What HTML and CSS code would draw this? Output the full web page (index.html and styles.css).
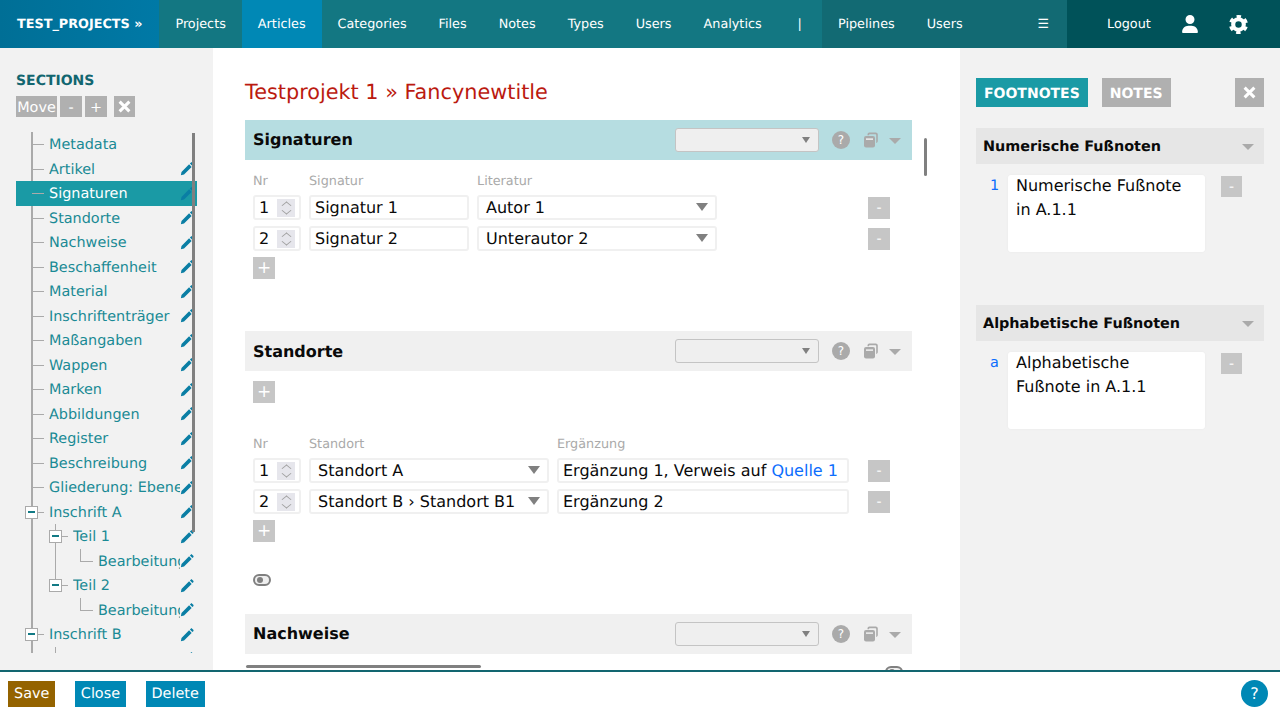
FILE: index.html
```html
<!DOCTYPE html>
<html lang="en">
<head>
  <meta charset="UTF-8" />
  <title>Testprojekt 1 » Fancynewtitle</title>
  <link rel="stylesheet" href="styles.css">
</head>
<body>
  <svg class="defs" width="0" height="0">
    <symbol id="i-pencil" viewBox="0 0 16 16">
      <path d="M1 15l.7-3.600L10.400 2.700l2.900 2.900L4.600 14.300zM11.300 1.800l1-1c.5-.5 1.100-.5 1.600 0l1.300 1.300c.5.5.5 1.100 0 1.600l-1 1z"/>
    </symbol>
    <symbol id="i-copy" viewBox="0 0 16 16">
      <path d="M4.500 3.200V2.500C4.500 1.400 5.300.6 6.400.6h6.400c1.100 0 2 .9 2 2v6.500c0 1-.7 1.800-1.600 1.900V9.300V2.900c0-.4-.3-.7-.7-.7H6.700c-.4 0-.7.3-.7.7v.3z"/>
      <rect x="1" y="4" width="11" height="11.500" rx="2"/>
      <rect x="3" y="6.500" width="7" height="1.200" fill="#fff"/>
    </symbol>
    <symbol id="i-x" viewBox="0 0 12 12">
      <path d="M1.500 1.500l9 9M10.500 1.500l-9 9" stroke="#fff" stroke-width="2.800" fill="none"/>
    </symbol>
  </svg>

  <!-- Top bar -->
  <header class="topbar">
    <a class="brand">TEST_PROJECTS »</a>
    <nav class="mainnav">
      <a>Projects</a>
      <a class="active">Articles</a>
      <a>Categories</a>
      <a>Files</a>
      <a>Notes</a>
      <a>Types</a>
      <a>Users</a>
      <a>Analytics</a>
      <a class="sep">|</a>
    </nav>
    <nav class="adminnav">
      <a>Pipelines</a>
      <a>Users</a>
      <a class="burger">☰</a>
    </nav>
    <div class="usernav">
      <a>Logout</a>
      <svg class="usericon" viewBox="0 0 448 512" width="16" height="18"><path fill="#fff" d="M224 256a128 128 0 1 0 0-256 128 128 0 1 0 0 256zm-45.700 48C79.800 304 0 383.800 0 482.300 0 498.700 13.300 512 29.700 512h388.600c16.400 0 29.700-13.300 29.700-29.700C448 383.800 368.200 304 269.700 304z"/></svg>
      <svg class="gearicon" viewBox="0 0 24 24" width="19" height="19" fill="none" stroke="#fff">
        <circle cx="12" cy="12" r="6.700" stroke-width="5.200"/>
        <circle cx="12" cy="12" r="10" stroke-width="4" stroke-dasharray="5.400 5.072" transform="rotate(15 12 12)"/>
      </svg>
    </div>
  </header>

  <div class="workspace">
    <!-- Sections sidebar -->
    <aside class="sidebar">
      <h2>SECTIONS</h2>
      <div class="tools">
        <button class="tool move">Move</button>
        <button class="tool">-</button>
        <button class="tool">+</button>
        <button class="tool close"><svg><use href="#i-x"/></svg></button>
      </div>
      <div class="tree">
        <div class="row leaf"><span class="label">Metadata</span></div>
        <div class="row leaf"><span class="label">Artikel</span><svg class="pen"><use href="#i-pencil"/></svg></div>
        <div class="row leaf selected"><span class="label">Signaturen</span><svg class="pen"><use href="#i-pencil"/></svg></div>
        <div class="row leaf"><span class="label">Standorte</span><svg class="pen"><use href="#i-pencil"/></svg></div>
        <div class="row leaf"><span class="label">Nachweise</span><svg class="pen"><use href="#i-pencil"/></svg></div>
        <div class="row leaf"><span class="label">Beschaffenheit</span><svg class="pen"><use href="#i-pencil"/></svg></div>
        <div class="row leaf"><span class="label">Material</span><svg class="pen"><use href="#i-pencil"/></svg></div>
        <div class="row leaf"><span class="label">Inschriftenträger</span><svg class="pen"><use href="#i-pencil"/></svg></div>
        <div class="row leaf"><span class="label">Maßangaben</span><svg class="pen"><use href="#i-pencil"/></svg></div>
        <div class="row leaf"><span class="label">Wappen</span><svg class="pen"><use href="#i-pencil"/></svg></div>
        <div class="row leaf"><span class="label">Marken</span><svg class="pen"><use href="#i-pencil"/></svg></div>
        <div class="row leaf"><span class="label">Abbildungen</span><svg class="pen"><use href="#i-pencil"/></svg></div>
        <div class="row leaf"><span class="label">Register</span><svg class="pen"><use href="#i-pencil"/></svg></div>
        <div class="row leaf"><span class="label">Beschreibung</span><svg class="pen"><use href="#i-pencil"/></svg></div>
        <div class="row leaf"><span class="label">Gliederung: Ebenen</span><svg class="pen"><use href="#i-pencil"/></svg></div>
        <div class="row folder"><i class="box"></i><span class="label">Inschrift A</span><svg class="pen"><use href="#i-pencil"/></svg></div>
        <div class="subtree">
          <div class="row folder two"><i class="box"></i><span class="label">Teil 1</span><svg class="pen"><use href="#i-pencil"/></svg></div>
          <div class="row three"><span class="label">Bearbeitungen</span><svg class="pen"><use href="#i-pencil"/></svg></div>
          <div class="row folder two"><i class="box"></i><span class="label">Teil 2</span><svg class="pen"><use href="#i-pencil"/></svg></div>
          <div class="row three"><span class="label">Bearbeitungen</span><svg class="pen"><use href="#i-pencil"/></svg></div>
        </div>
        <div class="row folder"><i class="box"></i><span class="label">Inschrift B</span><svg class="pen"><use href="#i-pencil"/></svg></div>
        <div class="subtree">
          <div class="row folder two"><i class="box"></i><span class="label">Teil 1</span><svg class="pen"><use href="#i-pencil"/></svg></div>
        </div>
        <div class="treebar"></div>
      </div>
    </aside>

    <!-- Article content -->
    <main class="content">
      <h1>Testprojekt 1 » Fancynewtitle</h1>

      <section class="sec sec-sign">
        <div class="sechead current">
          <h3>Signaturen</h3>
          <div class="secselect"></div>
          <span class="help">?</span>
          <svg class="copy"><use href="#i-copy"/></svg>
          <i class="caret"></i>
        </div>
        <div class="secbody">
          <div class="grid sign labels"><span>Nr</span><span>Signatur</span><span>Literatur</span></div>
          <div class="grid sign">
            <div class="field num">1<i class="spin"></i></div>
            <div class="field">Signatur 1</div>
            <div class="field select">Autor 1</div>
            <button class="sq minus">-</button>
          </div>
          <div class="grid sign">
            <div class="field num">2<i class="spin"></i></div>
            <div class="field">Signatur 2</div>
            <div class="field select">Unterautor 2</div>
            <button class="sq minus">-</button>
          </div>
          <button class="sq plus">+</button>
        </div>
      </section>

      <section class="sec sec-place">
        <div class="sechead">
          <h3>Standorte</h3>
          <div class="secselect"></div>
          <span class="help">?</span>
          <svg class="copy"><use href="#i-copy"/></svg>
          <i class="caret"></i>
        </div>
        <div class="secbody">
          <button class="sq plus first">+</button>
          <div class="grid place labels"><span>Nr</span><span>Standort</span><span>Ergänzung</span></div>
          <div class="grid place">
            <div class="field num">1<i class="spin"></i></div>
            <div class="field select">Standort A</div>
            <div class="field">Ergänzung 1, Verweis auf&nbsp;<a>Quelle 1</a></div>
            <button class="sq minus">-</button>
          </div>
          <div class="grid place">
            <div class="field num">2<i class="spin"></i></div>
            <div class="field select">Standort B › Standort B1</div>
            <div class="field">Ergänzung 2</div>
            <button class="sq minus">-</button>
          </div>
          <button class="sq plus">+</button>
          <i class="toggle"></i>
        </div>
      </section>

      <section class="sec">
        <div class="sechead">
          <h3>Nachweise</h3>
          <div class="secselect"></div>
          <span class="help">?</span>
          <svg class="copy"><use href="#i-copy"/></svg>
          <i class="caret"></i>
        </div>
      </section>

      <div class="vbar"></div>
      <div class="hbar"></div>
      <i class="toggle lower"></i>
    </main>

    <!-- Footnotes pane -->
    <aside class="notes">
      <div class="tabs">
        <button class="tab active">FOOTNOTES</button>
        <button class="tab">NOTES</button>
        <button class="tab closer"><svg><use href="#i-x"/></svg></button>
      </div>

      <div class="notegroup">
        <div class="notehead"><h4>Numerische Fußnoten</h4><i class="caret"></i></div>
        <div class="note">
          <a class="mark">1</a>
          <div class="notetext"><p>Numerische Fußnote in A.1.1</p></div>
          <button class="sq minus">-</button>
        </div>
      </div>

      <div class="notegroup">
        <div class="notehead"><h4>Alphabetische Fußnoten</h4><i class="caret"></i></div>
        <div class="note">
          <a class="mark">a</a>
          <div class="notetext"><p>Alphabetische Fußnote in A.1.1</p></div>
          <button class="sq minus">-</button>
        </div>
      </div>
    </aside>
  </div>

  <!-- Action bar -->
  <footer class="actions">
    <button class="act save">Save</button>
    <button class="act">Close</button>
    <button class="act">Delete</button>
    <span class="bighelp">?</span>
  </footer>
</body>
</html>
```
FILE: styles.css
```css
/* Reset & base */
* { box-sizing: border-box; margin: 0; padding: 0; }
html, body { height: 100%; overflow: hidden; }
body {
  display: flex;
  flex-direction: column;
  font-family: "DejaVu Sans", sans-serif;
  text-rendering: geometricPrecision;
  color: #0a0a0a;
  background: #fff;
}
button { font-family: inherit; border: none; cursor: pointer; text-rendering: geometricPrecision; }
i { display: block; }
.defs { position: absolute; }

/* Top bar */
.topbar { display: flex; height: 48px; flex: none; font-size: 12.800px; color: #fff; }
.topbar a { display: flex; align-items: center; }
.brand {
  width: 159.400px;
  padding-left: 17px;
  font-weight: bold;
  background: linear-gradient(to right, #006f96, #0079a6);
}
.mainnav { display: flex; width: 662.600px; background: #137782; }
.adminnav { display: flex; width: 245px; background: #126a73; }
.mainnav a, .adminnav a { padding: 0 16px; }
.mainnav a.active { background: #0088b5; }
.mainnav .sep { width: 44px; padding: 0; justify-content: center; }
.adminnav .burger { margin-left: 43px; }
.usernav {
  display: flex;
  align-items: center;
  flex: 1;
  padding-left: 40px;
  background: #005259;
}
.usericon { margin-left: 31px; }
.gearicon { margin-left: 31px; }

/* Page columns */
.workspace { display: flex; flex: 1; min-height: 0; }

/* Sidebar */
.sidebar { width: 213px; flex: none; padding: 24px 16px 0; background: #f2f2f2; }
.sidebar h2 { padding-top: 1px; font-size: 14px; line-height: 17px; color: #126670; }
.tools { display: flex; gap: 3px; margin-top: 6px; height: 21px; }
.tool {
  width: 22px;
  padding-top: 3px;
  font-size: 14.400px;
  line-height: 18px;
  color: #fff;
  background: #b0b0b0;
}
.tool.move { width: 41px; }
.tool.close { display: flex; align-items: center; justify-content: center; width: 21px; margin-left: 4px; padding: 0; }
.tool svg { width: 13px; height: 13px; }

.tree { position: relative; width: 181px; height: 521px; margin-top: 15px; overflow: hidden; }
.tree::before {
  content: "";
  position: absolute;
  left: 15px;
  top: 0;
  bottom: 0;
  width: 2px;
  background: #aaa;
}
.row {
  position: relative;
  display: flex;
  align-items: center;
  height: 24.500px;
  padding: 2px 0 0 33px;
  font-size: 14.400px;
  color: #1a8a95;
}
.row.selected { background: #1a9aa5; color: #fff; }
.label { flex: 1; min-width: 0; overflow: hidden; white-space: nowrap; }
.pen { flex: none; width: 14px; height: 14px; margin: -1px 3px 0 0; fill: #0a7ea4; }

/* tree connectors */
.leaf::before, .folder::before {
  content: "";
  position: absolute;
  left: 16px;
  top: 50%;
  width: 12px;
  height: 1px;
  background: #aaa;
}
.box {
  position: absolute;
  left: 9px;
  top: 50%;
  width: 13px;
  height: 13px;
  margin-top: -6px;
  background: #fff;
  border: 1px solid #aaa;
}
.box::after {
  content: "";
  position: absolute;
  left: 2px;
  top: 4px;
  width: 7px;
  height: 2px;
  background: #127a85;
}
.row.two { padding-left: 57px; }
.two::before { left: 40px; width: 12px; }
.two .box { left: 33px; }
.row.three { padding-left: 82px; }
.three::before {
  content: "";
  position: absolute;
  left: 64px;
  top: 0;
  width: 12px;
  height: 12px;
  border-left: 1px solid #aaa;
  border-bottom: 1px solid #aaa;
}
.subtree { position: relative; }
.subtree::before {
  content: "";
  position: absolute;
  left: 39px;
  top: 0;
  height: 62px;
  width: 1px;
  background: #aaa;
}
.subtree:last-of-type::before { height: 12px; }
.treebar {
  position: absolute;
  left: 176px;
  top: 1px;
  width: 3px;
  height: 399px;
  background: #808080;
}

/* Main column */
.content {
  position: relative;
  width: 747px;
  flex: none;
  padding: 32px 48px 0 32px;
  overflow: hidden;
}
.content h1 {
  font-size: 20.800px;
  font-weight: normal;
  line-height: 24px;
  margin-bottom: 16px;
  color: #bb1a10;
}
.sechead {
  display: flex;
  align-items: center;
  height: 40px;
  padding: 0 11px 0 8px;
  background: #f0f0f0;
}
.sechead.current { background: #b6dde1; }
.sechead h3 { flex: 1; padding-bottom: 1px; font-size: 16px; }
.sec-place .sechead h3 { padding-bottom: 0; }
.secselect {
  position: relative;
  width: 144px;
  height: 24px;
  background: #efefef;
  border: 1px solid #c4c4c4;
  border-radius: 3px;
}
.secselect::after {
  content: "";
  position: absolute;
  right: 8px;
  top: 8px;
  border: 4px solid transparent;
  border-top: 6px solid #808080;
  border-bottom: 0;
}
.help {
  width: 18px;
  height: 18px;
  margin-left: 13px;
  border-radius: 50%;
  font-size: 12px;
  line-height: 18px;
  text-align: center;
  color: #fff;
  background: #aaa;
}
.copy { width: 16px; height: 16px; margin-left: 13px; fill: #aaa; }
.caret {
  width: 0;
  height: 0;
  margin-left: 10px;
  margin-top: 2px;
  border: 6px solid transparent;
  border-top: 6px solid #aaa;
  border-bottom: 0;
}

.sec-sign { height: 211px; }
.sec-place { height: 283px; }
.secbody { position: relative; padding: 13px 0 0 8px; }
.grid { display: grid; column-gap: 8px; align-items: center; height: 25px; margin-bottom: 6px; }
.grid.sign { grid-template-columns: 48px 160px 240px 1fr 22px; margin-right: 22px; }
.grid.place { grid-template-columns: 48px 240px 292px 1fr 22px; margin-right: 22px; }
.grid.labels { height: 16px; margin-bottom: 6px; font-size: 12.800px; color: #aaa; }
.field {
  position: relative;
  display: flex;
  align-items: center;
  height: 25px;
  padding-left: 4px;
  font-size: 16px;
  white-space: nowrap;
  background: #fff;
  border: 2px solid #f0f0f0;
  border-radius: 3px;
}
.field a { color: #0d6efd; }
.field.select { padding-left: 7px; }
.field.select::after {
  content: "";
  position: absolute;
  right: 7px;
  top: 6px;
  border: 6px solid transparent;
  border-top: 8px solid #808080;
  border-bottom: 0;
}
.spin {
  position: absolute;
  left: 22px;
  top: 2px;
  width: 18px;
  height: 18px;
  background: #e6e6ec;
}
.spin::before, .spin::after {
  content: "";
  position: absolute;
  left: 6px;
  width: 6px;
  height: 6px;
  border-left: 1px solid #a0a0a0;
  border-top: 1px solid #a0a0a0;
  transform: scaleY(0.8) rotate(45deg);
}
.spin::before { top: 3px; }
.spin::after { top: 8px; transform: scaleY(0.8) rotate(225deg); }
.sq {
  display: block;
  width: 22px;
  height: 22px;
  font-size: 14px;
  line-height: 22px;
  color: #fff;
  background: #c6c6c6;
}
.grid .sq.minus { grid-column: 5; grid-row: 1; }
.sq.plus { margin-top: 1px; font-size: 17px; }
.sq.plus.first { margin: -3px 0 33px; }
.secbody .toggle { margin-top: 32px; }
.toggle {
  position: relative;
  width: 18px;
  height: 12px;
  background: #eee;
  border: 2px solid #808080;
  border-radius: 6px;
}
.toggle::after {
  content: "";
  position: absolute;
  left: 2px;
  top: 1px;
  width: 6px;
  height: 6px;
  border-radius: 50%;
  background: #808080;
}
.toggle.lower { position: absolute; left: 672px; top: 618px; }
.vbar {
  position: absolute;
  left: 711px;
  top: 90px;
  width: 3px;
  height: 38px;
  border-radius: 2px;
  background: #808080;
}
.hbar {
  position: absolute;
  left: 33px;
  top: 617px;
  width: 235px;
  height: 3px;
  border-radius: 2px;
  background: #808080;
}

/* Footnotes pane */
.notes { flex: 1; padding: 30px 16px 0; background: #f2f2f2; }
.tabs { display: flex; gap: 14px; height: 29px; }
.tab {
  padding: 2px 8px 0;
  font-size: 14px;
  font-weight: bold;
  color: #fff;
  background: #b0b0b0;
}
.tab.active { background: #1a9aa5; }
.tab.closer { display: flex; align-items: center; justify-content: center; width: 29px; margin-left: auto; padding: 0; }
.tab svg { width: 13px; height: 13px; }
.notegroup { height: 177px; margin-top: 21px; }
.notegroup + .notegroup { margin-top: 0; }
.notehead {
  display: flex;
  align-items: center;
  height: 36px;
  padding: 0 10px 0 7px;
  background: #e6e6e6;
}
.notehead h4 { flex: 1; padding-top: 1px; font-size: 14.400px; }
.note { display: flex; align-items: flex-start; margin-top: 11px; padding-left: 14px; }
.mark { width: 18px; padding-top: 3px; font-size: 14.400px; color: #0d6efd; }
.notetext {
  width: 197px;
  height: 77px;
  padding: 0 8px;
  font-size: 16px;
  line-height: 24px;
  background: #fff;
  border-radius: 3px;
  box-shadow: 0 0 2px #e8e8e8;
}
.notetext p { margin-top: -1px; }
.note .sq { width: 21px; height: 21px; margin: 1px 0 0 16px; }

/* Action bar */
.actions {
  display: flex;
  align-items: center;
  flex: none;
  height: 45px;
  gap: 19.500px;
  padding: 0 12px 0 8px;
  border-top: 2px solid #126670;
}
.act { height: 26px; padding: 0 6px; font-size: 14.400px; color: #fff; background: #0088b5; }
.act.save { background: #946300; }
.bighelp {
  width: 27px;
  height: 27px;
  margin-left: auto;
  border-radius: 50%;
  font-size: 16px;
  line-height: 27px;
  text-align: center;
  color: #fff;
  background: #0088b5;
}
```
